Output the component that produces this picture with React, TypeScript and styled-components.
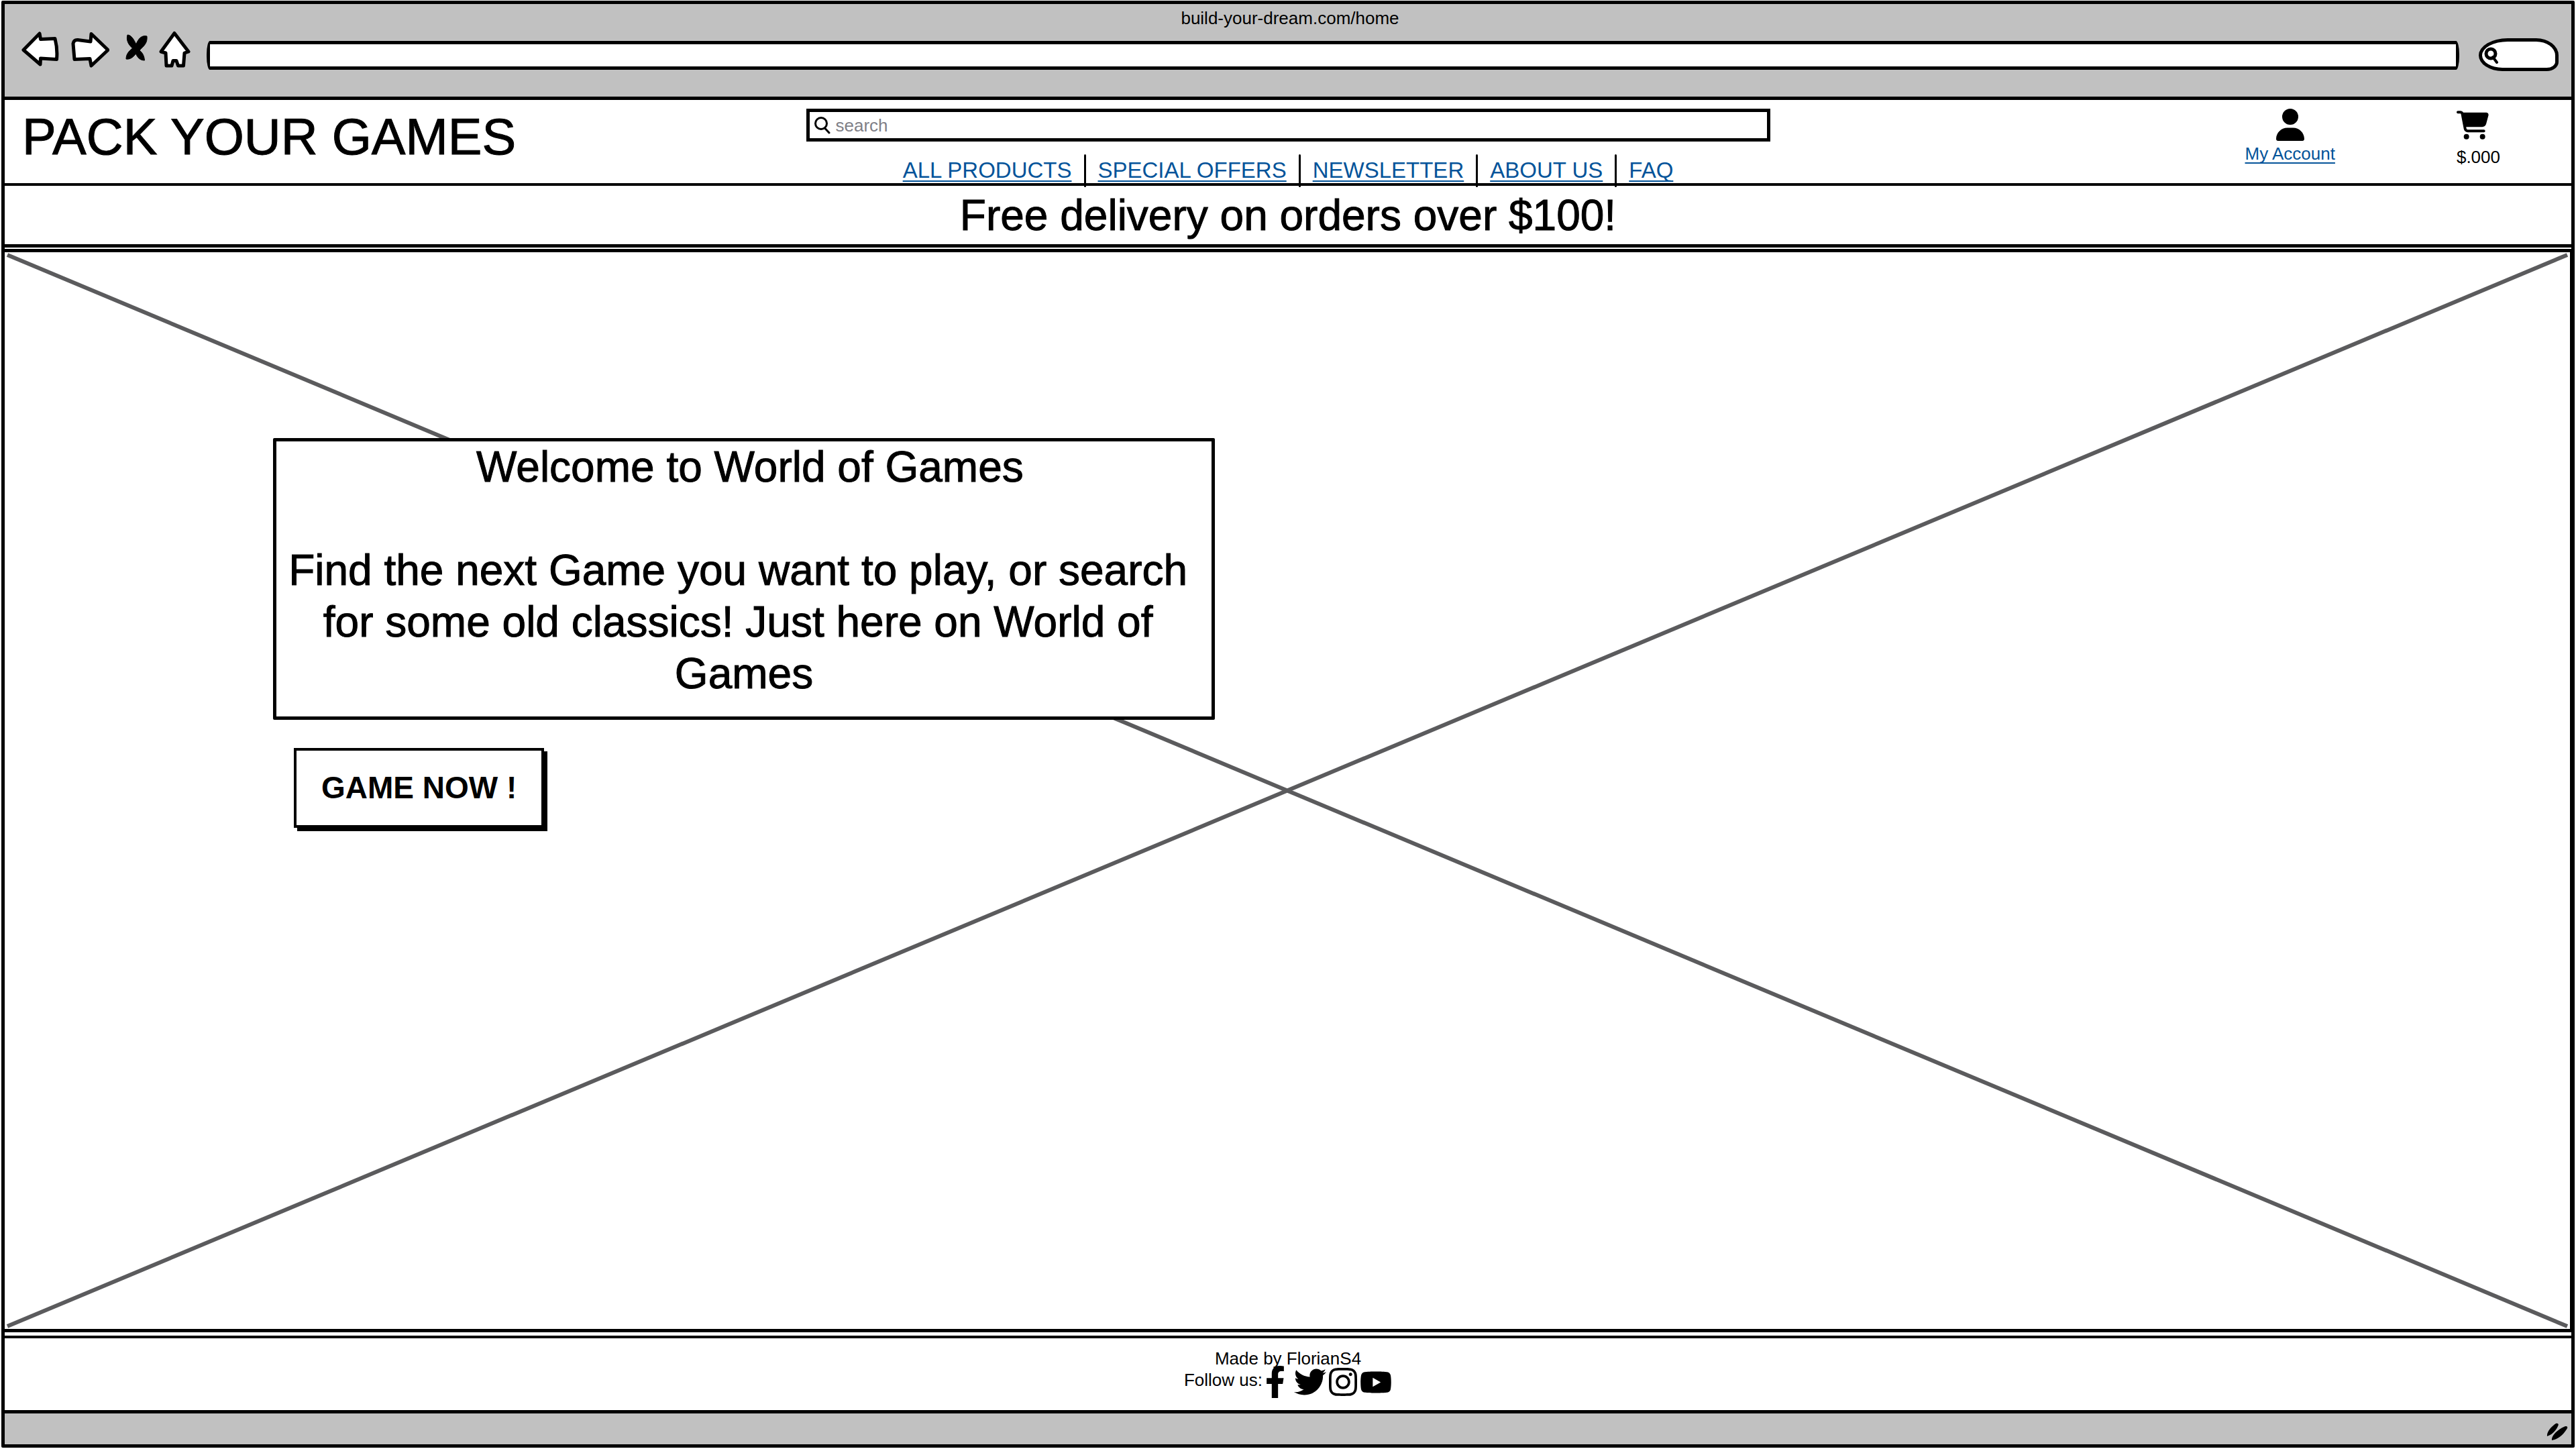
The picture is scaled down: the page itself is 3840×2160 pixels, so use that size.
import React from "react";
import styled, { createGlobalStyle } from "styled-components";
import { FaFacebookF, FaTwitter, FaInstagram, FaYoutube } from "react-icons/fa";
import { FaUser, FaCartShopping } from "react-icons/fa6";

const INK = "#000";
const LINK = "#04549a";
const CHROME = "#c1c1c1";

const GlobalStyle = createGlobalStyle`
  *, *::before, *::after { box-sizing: border-box; }
  body {
    margin: 0;
    background: #fff;
    color: ${INK};
    font-family: "Liberation Sans", Arial, sans-serif;
    font-size: 26px;
    line-height: 32px;
  }
  h1, h2, p, ul { margin: 0; padding: 0; font-weight: 400; }
  ul { list-style: none; }
  svg { display: block; }
  input { font: inherit; color: inherit; outline: none; }
  button { font: inherit; color: inherit; cursor: pointer; }
`;

const Page = styled.div`
  display: flex;
  min-height: 100vh;
  padding: 1px 2px 2px;
`;

const BrowserWindow = styled.div`
  flex: 1;
  display: flex;
  flex-direction: column;
  border: 5px solid ${INK};
  border-radius: 2px;
`;

const Toolbar = styled.div`
  background: ${CHROME};
  border-bottom: 5px solid ${INK};
  padding: 5px 19px 38px 25px;
`;

const PageAddress = styled.p`
  text-align: center;
`;

const ToolbarRow = styled.div`
  display: flex;
  align-items: flex-start;
  gap: 17px;
  padding-top: 3px;
`;

const ToolButton = styled.button`
  padding: 0;
  border: 0;
  background: none;
`;

const AddressInput = styled.input`
  flex: 1;
  min-width: 0;
  height: 43px;
  margin-top: 15px;
  padding: 0 12px;
  border: 5px solid ${INK};
  border-radius: 5px / 20px;
  background: #fff;
`;

const SearchPill = styled.label`
  display: flex;
  align-items: center;
  width: 119px;
  height: 49px;
  margin: 11px 0 0 12px;
  padding-left: 3px;
  border: 5px solid ${INK};
  border-radius: 44px 34px 18px 36px / 26px 26px 14px 24px;
  background: #fff;
`;

const PillInput = styled.input`
  width: 72px;
  padding: 0;
  border: 0;
  background: transparent;
`;

const Header = styled.header`
  display: grid;
  grid-template-columns: 1fr minmax(0, 1437px) 1fr;
  padding-top: 13px;
`;

const Brand = styled.h1`
  padding-left: 26px;
  font-size: 76px;
  line-height: 84px;
  white-space: nowrap;
  -webkit-text-stroke: 1px ${INK};
`;

const HeaderCentre = styled.div`
  display: flex;
  flex-direction: column;
  gap: 19px;
`;

const SearchBox = styled.label`
  display: flex;
  align-items: center;
  gap: 8px;
  height: 49px;
  padding: 0 7px;
  border: 5px solid ${INK};
`;

const SearchInput = styled.input`
  flex: 1;
  padding: 0;
  border: 0;
  background: transparent;
  &::placeholder { color: #808087; opacity: 1; }
`;

const NavList = styled.ul`
  display: flex;
  justify-content: center;
  height: 43px;
`;

const NavItem = styled.li`
  display: flex;
  height: 49px;

  & > a {
    margin: 6px 18px 0;
  }

  & + &::before {
    content: "";
    width: 3px;
    height: 49px;
    border-radius: 2px;
    background: ${INK};
  }
`;

const TextLink = styled.a<{ $size: number }>`
  color: ${LINK};
  font-size: ${(p) => p.$size}px;
  line-height: ${(p) => (p.$size > 30 ? 36 : 32)}px;
  text-decoration: underline;
  text-decoration-thickness: 2px;
  text-decoration-skip-ink: none;
  text-underline-offset: 4px;
  white-space: nowrap;
`;

const HeaderActions = styled.div`
  display: flex;
  justify-content: flex-end;
  gap: 181px;
  padding-right: 106px;
`;

const Account = styled.div`
  display: flex;
  flex-direction: column;
  align-items: center;
  gap: 3px;
`;

const Cart = styled.div`
  display: flex;
  flex-direction: column;
  gap: 10px;
  padding-top: 3px;
`;

const Banner = styled.p`
  border-top: 4px solid ${INK};
  border-bottom: 5px solid ${INK};
  padding: 6px 0 4px;
  font-size: 64px;
  line-height: 77px;
  text-align: center;
  -webkit-text-stroke: 1px ${INK};
`;

const Hero = styled.main`
  position: relative;
  flex: 1;
  margin: 2px 0 5px;
  padding: 277px 400px 60px;
  border: solid ${INK};
  border-width: 5px 2px 5px 0;
`;

const Placeholder = styled.svg`
  position: absolute;
  top: 4px;
  left: 4px;
  width: calc(100% - 8px);
  height: calc(100% - 8px);
  overflow: visible;
`;

const WelcomeCard = styled.section`
  position: relative;
  max-width: 1404px;
  padding-bottom: 25px;
  border: 5px solid ${INK};
  border-radius: 2px;
  background: #fff;
  font-size: 64px;
  line-height: 77px;
  text-align: center;
  -webkit-text-stroke: 1px ${INK};
`;

const WelcomeTitle = styled.h2`
  margin-bottom: 77px;
  font-size: 64px;
`;

const PlayButton = styled.button`
  position: relative;
  display: block;
  margin: 42px 0 0 31px;
  padding: 32px 37px;
  border: 4px solid ${INK};
  background: #fff;
  box-shadow: 5px 5px 0 ${INK};
  font-size: 46px;
  font-weight: 700;
  line-height: 47px;
`;

const Footer = styled.footer`
  display: flex;
  flex-direction: column;
  align-items: center;
  padding: 14px 0 18px;
  border-top: 4px solid ${INK};
`;

const FollowRow = styled.div`
  display: flex;
  gap: 4px;
`;

const SocialList = styled.ul`
  display: flex;
  align-items: center;
  gap: 4px;
  height: 48px;
  margin-top: -5px;
`;

const SocialLink = styled.a<{ $width: number }>`
  display: block;
  width: ${(p) => p.$width}px;
  color: ${INK};
`;

const StatusBar = styled.div`
  display: flex;
  align-items: flex-end;
  justify-content: flex-end;
  height: 51px;
  padding: 0 5px 4px;
  border-top: 5px solid ${INK};
  background: ${CHROME};
`;

const toolIcons = [
  {
    label: "Back",
    width: 56,
    path: "M3 28.5 L27 4 L28.5 12.5 L50 11.5 Q54 27 52.5 42.5 L28.5 41 L28 50 Z",
  },
  {
    label: "Forward",
    width: 58,
    path: "M4 19 Q5 13 11 13.5 L30 16 L31 4.5 L56 28.5 L31 52 L29 41.5 L6 42.5 Z",
  },
  {
    label: "Stop",
    width: 40,
    solid: true,
    path: "M10 6 C16 6 20 14 23 20 C26 12 31 6 39 8 C40 18 35 22 28 29 C33 33 35 38 35.5 44 C29 44 25 40 22.5 34 C19 39 14 43 8 42 C8 35 12 30 17.5 26 C11 20 8 14 10 6 Z",
  },
  {
    label: "Home",
    width: 54,
    path: "M23 3.5 L44 31 L38 33 L36.5 52 L28.5 52 L26 44.5 L21 44.5 L19 52 L11 52 L10 33 L3 31 Z",
  },
];

const navLinks = ["ALL PRODUCTS", "SPECIAL OFFERS", "NEWSLETTER", "ABOUT US", "FAQ"];

const socials = [
  { name: "Facebook", width: 39, icon: <FaFacebookF style={{ width: 30, height: 48 }} /> },
  { name: "Twitter", width: 48, icon: <FaTwitter size={48} /> },
  { name: "Instagram", width: 42, icon: <FaInstagram size={48} style={{ width: 42 }} /> },
  { name: "YouTube", width: 48, icon: <FaYoutube style={{ width: 48, height: 43 }} /> },
];

export default function App() {
  return (
    <>
      <GlobalStyle />
      <Page>
        <BrowserWindow>
          <Toolbar>
            <PageAddress>build-your-dream.com/home</PageAddress>
            <ToolbarRow>
              {toolIcons.map((icon) => (
                <ToolButton key={icon.label} type="button" aria-label={icon.label}>
                  <svg width={icon.width} height="55" viewBox={`0 0 ${icon.width} 55`}>
                    <path
                      d={icon.path}
                      fill={icon.solid ? INK : "#fff"}
                      stroke={INK}
                      strokeWidth={icon.solid ? 1 : 5}
                      strokeLinejoin="round"
                    />
                  </svg>
                </ToolButton>
              ))}
              <AddressInput type="text" aria-label="Address" />
              <SearchPill>
                <svg width="22" height="26" viewBox="0 0 22 26" fill="none" stroke={INK}>
                  <circle cx="10" cy="11" r="7" strokeWidth="5" />
                  <path d="M13 16 L19 24" strokeWidth="4" strokeLinecap="round" />
                </svg>
                <PillInput type="text" aria-label="Search the web" />
              </SearchPill>
            </ToolbarRow>
          </Toolbar>

          <Header>
            <Brand>PACK YOUR GAMES</Brand>
            <HeaderCentre>
              <SearchBox>
                <svg width="24" height="26" viewBox="0 0 24 26" fill="none" stroke={INK}>
                  <circle cx="10" cy="10" r="8.5" strokeWidth="3" />
                  <path d="M15.5 17 L22 24" strokeWidth="3" strokeLinecap="round" />
                </svg>
                <SearchInput type="text" placeholder="search" aria-label="Search" />
              </SearchBox>
              <nav>
                <NavList>
                  {navLinks.map((text) => (
                    <NavItem key={text}>
                      <TextLink href="#" $size={33}>
                        {text}
                      </TextLink>
                    </NavItem>
                  ))}
                </NavList>
              </nav>
            </HeaderCentre>
            <HeaderActions>
              <Account>
                <FaUser style={{ width: 42, height: 48 }} />
                <TextLink href="#" $size={26}>
                  My Account
                </TextLink>
              </Account>
              <Cart>
                <FaCartShopping style={{ width: 48, height: 43 }} />
                <span>$.000</span>
              </Cart>
            </HeaderActions>
          </Header>

          <Banner>Free delivery on orders over $100!</Banner>

          <Hero>
            <Placeholder stroke="#5b5b5d" strokeWidth="6" aria-hidden="true">
              <line x1="0" y1="0" x2="100%" y2="100%" />
              <line x1="0" y1="100%" x2="100%" y2="0" />
            </Placeholder>
            <WelcomeCard>
              <WelcomeTitle>&nbsp;Welcome to World of Games</WelcomeTitle>
              <p>
                Find the next Game you want to play, or search&nbsp;
                <br />
                for some old classics! Just here on World of&nbsp;
                <br />
                Games
              </p>
            </WelcomeCard>
            <PlayButton type="button">GAME NOW !</PlayButton>
          </Hero>

          <Footer>
            <p>Made by FlorianS4</p>
            <FollowRow>
              <span>Follow us:</span>
              <SocialList>
                {socials.map((s) => (
                  <li key={s.name}>
                    <SocialLink href="#" aria-label={s.name} $width={s.width}>
                      {s.icon}
                    </SocialLink>
                  </li>
                ))}
              </SocialList>
            </FollowRow>
          </Footer>

          <StatusBar>
            <svg width="32" height="28" viewBox="0 0 32 28" fill={INK} aria-hidden="true">
              <path d="M14 1 C17 0 19 2 17 5 C14 12 8 18 1 20 C0 13 8 5 14 1 Z" />
              <path d="M26 6 C29 4 32 5 31 8 C26 17 17 25 8 26 C7 19 17 10 26 6 Z" />
            </svg>
          </StatusBar>
        </BrowserWindow>
      </Page>
    </>
  );
}
